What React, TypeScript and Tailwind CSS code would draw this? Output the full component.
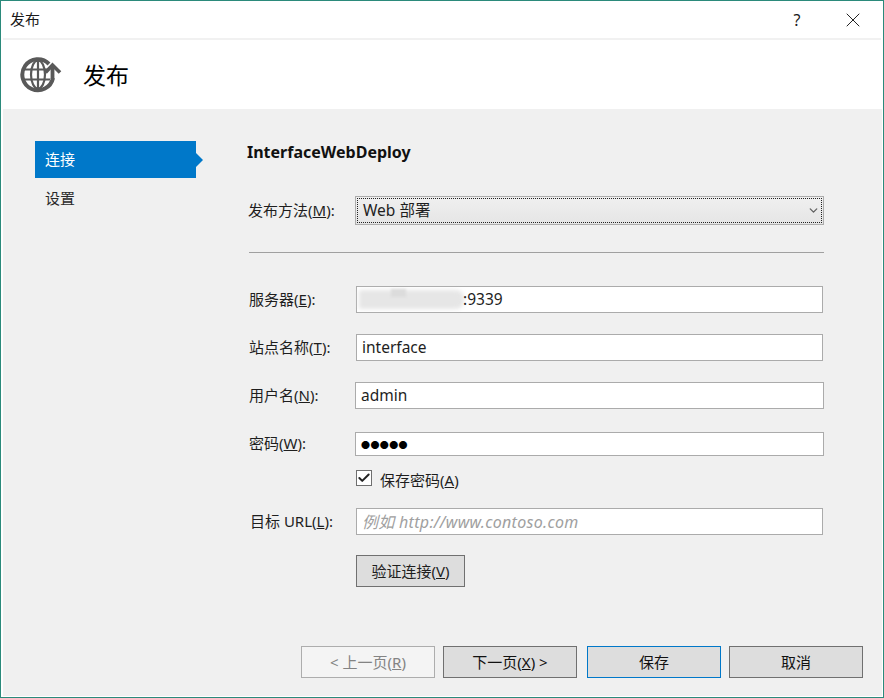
import React from 'react';
import { Check, ChevronDown, X } from 'lucide-react';

const font = 'font-["Noto_Sans","Noto_Sans_CJK_SC",sans-serif]';

function Mnemonic({ text, letter, tail = '):' }: { text: string; letter: string; tail?: string }) {
  return (
    <>
      {text}(<u>{letter}</u>{tail}
    </>
  );
}

function Field({
  label,
  className,
  labelClass,
  children,
}: {
  label: React.ReactNode;
  className: string;
  labelClass: string;
  children: React.ReactNode;
}) {
  return (
    <div className={`flex items-center ${className}`}>
      <div className={`pb-[2px] text-[15px] leading-5 text-[#1e1e1e] whitespace-nowrap ${labelClass}`}>{label}</div>
      {children}
    </div>
  );
}

function TextBox({ className, children }: { className: string; children?: React.ReactNode }) {
  return (
    <div className={`relative flex items-center bg-white border border-[#ababab] pl-[5px] text-[#1e1e1e] ${className}`}>
      {children}
    </div>
  );
}

function WizardButton({
  children,
  className = 'bg-[#dddddd] border-[#707070] text-[#111111]',
}: {
  children: React.ReactNode;
  className?: string;
}) {
  return (
    <button type="button" className={`w-[134px] h-[32px] border text-[15px] leading-5 ${className}`}>
      {children}
    </button>
  );
}

function PublishIcon() {
  return (
    <svg width="44" height="40" viewBox="0 0 44 40" fill="none" stroke="#595959" className="shrink-0">
      {/* globe, open at the upper right where the arrow sits */}
      <path d="M29 9A15.5 15.5 0 1 0 33 23" strokeWidth="4" />
      <ellipse cx="18" cy="19.5" rx="7" ry="14" strokeWidth="2.2" />
      <path d="M18 5V34M4 14.5H28M4 24.5H30" strokeWidth="2.2" />
      {/* arrow */}
      <path d="M25.5 17.5L32.5 10L40 17.5" strokeWidth="3.6" />
      <path d="M32.5 11V24" strokeWidth="3.8" />
    </svg>
  );
}

export default function App() {
  return (
    <div className={`w-[884px] h-[698px] flex flex-col bg-white border border-[#2b8a7b] overflow-hidden ${font}`}>
      {/* Title bar */}
      <div className="h-[37px] shrink-0 flex items-center pl-[9px] pr-[18px] text-[15px] text-[#1a1a1a]">
        <span className="flex-1">发布</span>
        <span className="w-[16px] mr-[36px] text-[16px] text-center">?</span>
        <X size={24} strokeWidth={1} className="text-[#222222]" />
      </div>
      <div className="h-[2px] shrink-0 bg-[#f1f1f1] ml-[2px] mr-[2px]" />

      {/* Header */}
      <div className="h-[69px] shrink-0 flex items-center pl-[19px]">
        <PublishIcon />
        <span className="ml-[19px] mt-[2px] text-[23px] leading-none text-black">发布</span>
      </div>

      {/* Body */}
      <div className="flex-1 flex flex-col bg-[#f0f0f0] ml-[2px] mb-[1px] mr-[1px]">
        <div className="flex-1 flex">
          {/* Sidebar */}
          <div className="w-[244px] shrink-0 pl-[32px] pt-[32px] text-[15px]">
            <div className="relative w-[161px] h-[37px] flex items-center pl-[10px] bg-[#0078c9] text-white">
              连接
              <div className="absolute left-full top-[12px] border-y-[7px] border-l-[7px] border-y-transparent border-l-[#0078c9]" />
            </div>
            <div className="mt-[2px] h-[37px] flex items-center pl-[10px] text-[#2a2a2a]">设置</div>
          </div>

          {/* Form */}
          <div className="flex-1 pt-[32px]">
            <h2 className="h-[22px] flex items-center text-[16px] font-bold text-[#111111]">InterfaceWebDeploy</h2>

            <Field label={<Mnemonic text="发布方法" letter="M" />} className="mt-[33px]" labelClass="w-[108px] pl-[1px]">
              <div className="w-[469px] h-[29px] p-[1px] border border-[#acacac] bg-gradient-to-b from-[#f0f0f0] to-[#e5e5e5]">
                <div className="h-full flex items-center justify-between pl-[5px] pr-[1px] border border-dotted border-[#222222] text-[15.5px] text-[#1e1e1e]">
                  <span>Web 部署</span>
                  <ChevronDown size={13} strokeWidth={2.4} className="text-[#606060]" />
                </div>
              </div>
            </Field>

            <div className="mt-[27px] ml-[2px] w-[575px] h-[1px] bg-[#a0a0a0]" />

            <Field label={<Mnemonic text="服务器" letter="E" />} className="mt-[33px]" labelClass="w-[109px] pl-[2px]">
              <TextBox className="w-[467px] h-[27px] text-[15.5px]">
                {/* blurred host name */}
                <div className="absolute left-[2px] top-[3px] w-[105px] h-[19px] rounded-r-lg bg-[#e6e6e6] blur-[2px]" />
                <div className="absolute left-[34px] top-[2px] w-[15px] h-[8px] bg-[#dcdcdc] blur-[1px]" />
                <span className="relative ml-[101px]">:9339</span>
              </TextBox>
            </Field>

            <Field label={<Mnemonic text="站点名称" letter="T" />} className="mt-[21px]" labelClass="w-[109px] pl-[2px]">
              <TextBox className="w-[467px] h-[27px] text-[15.5px] pl-[4px]">interface</TextBox>
            </Field>

            <Field label={<Mnemonic text="用户名" letter="N" />} className="mt-[21px]" labelClass="w-[108px] pl-[2px]">
              <TextBox className="w-[469px] h-[27px] text-[15.5px]">admin</TextBox>
            </Field>

            <Field label={<Mnemonic text="密码" letter="W" />} className="mt-[23px]" labelClass="w-[108px] pl-[2px]">
              <TextBox className="w-[469px] h-[24px] text-black">
                <span className="text-[9px] tracking-[0.4px] leading-none">●●●●●</span>
              </TextBox>
            </Field>

            <div className="mt-[13px] ml-[109px] h-[18px] flex items-center">
              <div className="w-[16px] h-[16px] flex items-center justify-center bg-white border border-[#6f6f6f]">
                <Check size={14} strokeWidth={3.4} className="text-[#222222]" />
              </div>
              <span className="ml-[8px] mt-[4px] text-[15px] leading-5 text-[#1e1e1e]">
                <Mnemonic text="保存密码" letter="A" tail=")" />
              </span>
            </div>

            <Field label={<Mnemonic text="目标 URL" letter="L" />} className="mt-[21px]" labelClass="w-[109px] pl-[3px]">
              <TextBox className="w-[467px] h-[27px] pl-[2px] italic text-[16px] tracking-[0.3px] text-[#a0a0a0]">
                例如 http://www.contoso.com
              </TextBox>
            </Field>

            <button
              type="button"
              className="mt-[20px] ml-[109px] block w-[109px] h-[32px] bg-[#dddddd] border border-[#707070] text-[15px] leading-5 text-[#1e1e1e]"
            >
              <Mnemonic text="验证连接" letter="V" tail=")" />
            </button>
          </div>
        </div>

        {/* Footer buttons */}
        <div className="h-[50px] shrink-0 flex pl-[298px]">
          <WizardButton className="bg-[#f4f4f4] border-[#adadad] text-[#838383]">
            &lt; 上一页(<u>R</u>)
          </WizardButton>
          <div className="w-[8px]" />
          <WizardButton>
            下一页(<u>X</u>) &gt;
          </WizardButton>
          <div className="w-[10px]" />
          <WizardButton className="bg-[#dddddd] border-[#0078c9] text-[#111111]">保存</WizardButton>
          <div className="w-[8px]" />
          <WizardButton>取消</WizardButton>
        </div>
      </div>
    </div>
  );
}
